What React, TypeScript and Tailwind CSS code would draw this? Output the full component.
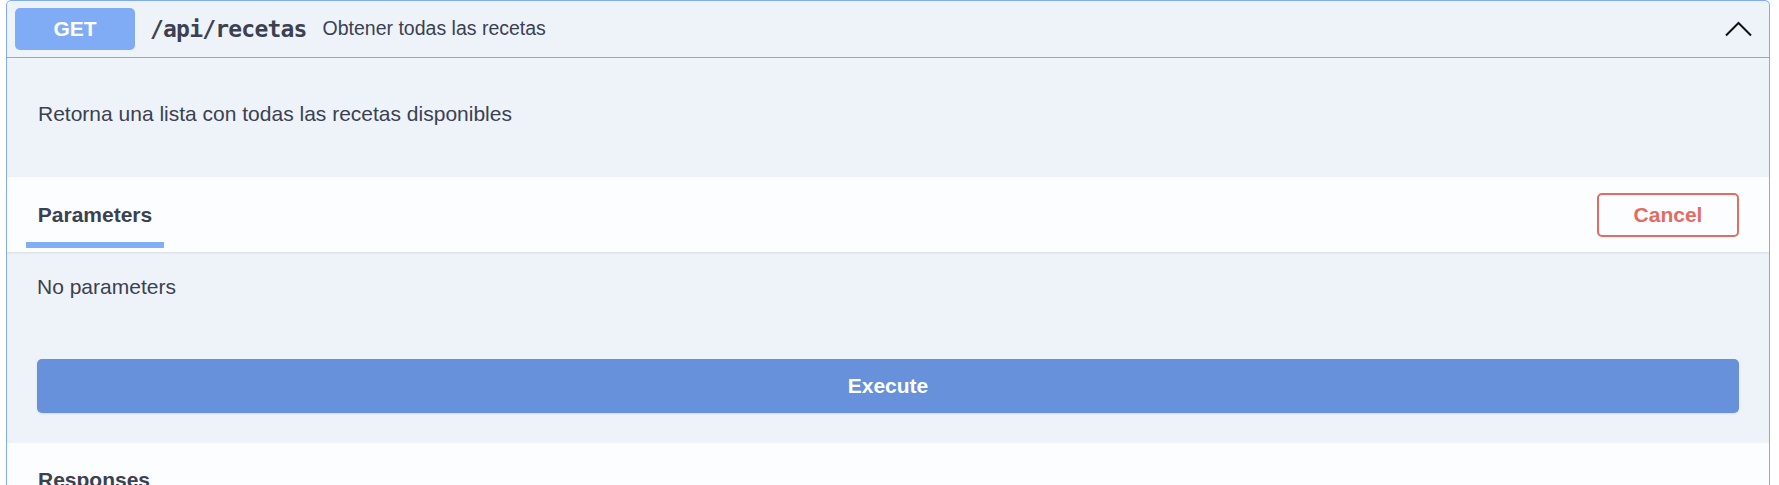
import React from "react";

// Swagger-style operation block, expanded "try it out" state
export default function App() {
  return (
    <div className="min-h-screen bg-white pl-[6px] pr-[9px] font-['Liberation_Sans',Arial,sans-serif] text-[#3b4151]">
      <div className="overflow-hidden rounded-[5px] border border-[#80acf6] bg-[#eef3fa]">
        {/* Summary bar */}
        <div className="flex h-[57px] items-center border-b border-[#80acf6] pl-[8px] pr-[17px]">
          <span className="flex h-[42px] w-[120px] items-center justify-center rounded-[5px] bg-[#80acf6] text-[21px] font-bold text-white">
            GET
          </span>
          <span className="ml-[15px] font-['DejaVu_Sans_Mono','Liberation_Mono',monospace] text-[23px] font-bold tracking-[-0.8px]">
            /api/recetas
          </span>
          <span className="ml-[16px] text-[19.5px]">Obtener todas las recetas</span>
          <svg className="ml-auto" width="27" height="16" viewBox="0 0 27 16" fill="none">
            <path d="M1 14.5 L13.5 2 L26 14.5" stroke="#111" strokeWidth="2" />
          </svg>
        </div>

        {/* Description */}
        <div className="h-[119px] pl-[31px] pt-[40px]">
          <p className="text-[21px]">Retorna una lista con todas las recetas disponibles</p>
        </div>

        {/* Tab header */}
        <div className="flex h-[75px] items-center bg-[#fcfdff] pl-[19px] pr-[30px] shadow-[0_1px_2px_rgba(0,0,0,0.1)]">
          <div className="relative flex h-full w-[138px] items-center justify-center">
            <h4 className="text-[21px] font-bold">Parameters</h4>
            <span className="absolute bottom-[4px] left-0 right-0 h-[6px] bg-[#82aef5]" />
          </div>
          <button className="ml-auto h-[44px] w-[142px] rounded-[5px] border-2 border-[#e56b62] text-[21px] font-bold text-[#e56b62]">
            Cancel
          </button>
        </div>

        {/* Parameters body */}
        <div className="px-[30px] pb-[30px]">
          <div className="flex h-[70px] items-center">
            <p className="text-[21px]">No parameters</p>
          </div>
          <button className="mt-[37px] flex h-[54px] w-full items-center justify-center rounded-[5px] bg-[#6791da] text-[21px] font-bold text-white shadow-[0_1px_2px_rgba(0,0,0,0.1)]">
            Execute
          </button>
        </div>

        {/* Responses */}
        <div className="h-[60px] bg-[#fcfdff] pl-[31px] pt-[21px]">
          <h4 className="text-[21px] font-bold">Responses</h4>
        </div>
      </div>
    </div>
  );
}
